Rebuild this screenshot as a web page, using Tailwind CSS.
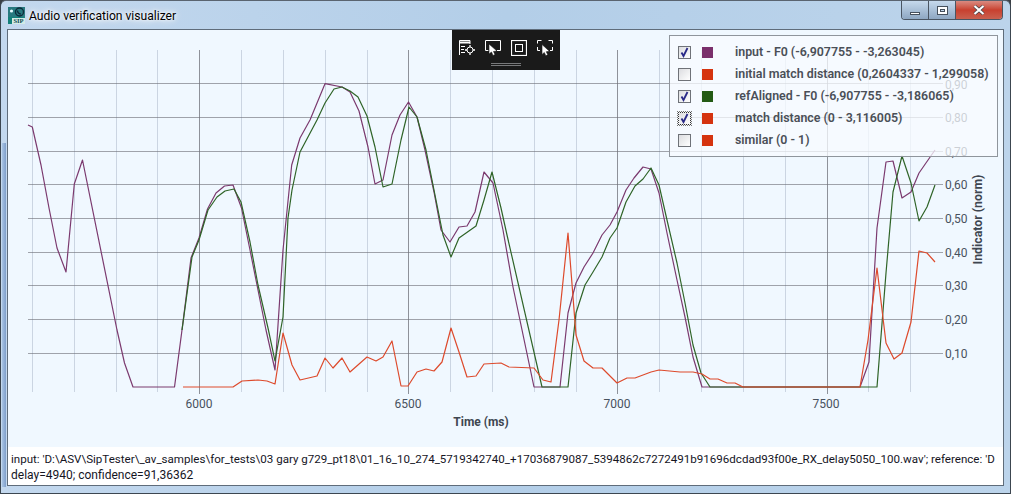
<!DOCTYPE html>
<html lang="en">
<head>
  <meta charset="UTF-8" />
  <title>Audio verification visualizer</title>
  <script src="https://cdn.jsdelivr.net/npm/@tailwindcss/browser@4"></script>
</head>
<body class="bg-[#3a3f45] overflow-hidden">

  <!-- Window -->
  <div class="relative w-[1011px] h-[494px] flex flex-col rounded-t-[6px] border border-[#3c4650] border-t-[#5a6470] bg-gradient-to-r from-[#c3d8ee] via-[#b3cee8] to-[#bcd4eb] font-['Roboto',sans-serif] overflow-hidden">

    <!-- Frame shading on the left edge -->
    <div class="absolute left-[1px] top-[142px] bottom-[6px] w-[4px] bg-gradient-to-r from-[#a9c4e4] to-[#7f9fca]"></div>

    <!-- Title bar -->
    <div class="h-[28px] shrink-0 flex items-start pl-[7px]">
      <svg class="mt-[6px]" width="17" height="17" viewBox="0 0 17 17">
        <rect width="17" height="17" fill="#12807a" />
        <rect width="17" height="10" fill="#27797f" />
        <circle cx="3.5" cy="4" r="1.6" fill="#e8fbff" />
        <circle cx="11.5" cy="5" r="4" fill="none" stroke="#0b2a3a" stroke-width="1.4" />
        <path d="M9.5 3.5c0 2 1.2 3.2 3.4 3.6" fill="none" stroke="#0b2a3a" stroke-width="1.4" />
        <rect y="11" x="4" width="13" height="6" fill="#d3ebe6" />
        <text x="10.5" y="16.4" text-anchor="middle" class="text-[6.5px] font-bold fill-[#0d4a50] font-['Liberation_Serif',serif]">SIP</text>
      </svg>
      <div class="ml-[4px] mt-[6px] text-[12.1px] leading-[18px] text-black [text-shadow:0_0_6px_#fff,0_0_10px_#fff,0_0_3px_#fff]">Audio verification visualizer</div>
      <!-- Window buttons -->
      <div class="ml-auto mr-[7px] flex h-[19px] rounded-b-[4px] border border-t-0 border-[#4a5562] overflow-hidden">
        <div class="w-[27px] flex items-end justify-center pb-[4px] bg-gradient-to-b from-[#c6d9ec] to-[#8ea7c2] border-r border-[#4a5562]">
          <div class="w-[10px] h-[3px] bg-white border border-[#46505c]"></div>
        </div>
        <div class="w-[27px] flex items-center justify-center bg-gradient-to-b from-[#c6d9ec] to-[#8ea7c2] border-r border-[#4a5562]">
          <div class="w-[11px] h-[9px] border border-[#46505c] bg-white flex items-center justify-center">
            <div class="w-[5px] h-[3px] border border-[#46505c] bg-[#c6d9ec]"></div>
          </div>
        </div>
        <div class="w-[46px] flex items-center justify-center bg-gradient-to-b from-[#d98a80] via-[#c8402f] to-[#c9604f]">
          <svg width="12" height="10" viewBox="0 0 12 10">
            <path d="M1.5 1l9 8M10.5 1l-9 8" stroke="#3a3f45" stroke-width="3.4" />
            <path d="M1.5 1l9 8M10.5 1l-9 8" stroke="#fff" stroke-width="2.2" />
          </svg>
        </div>
      </div>
    </div>

    <!-- Client area -->
    <div class="relative mx-[6px] h-[457px] shrink-0 flex flex-col border border-[#5f6c7a] bg-[#f0f8ff]">

      <!-- Chart -->
      <svg class="block shrink-0" width="995" height="417" viewBox="8 30 995 417">
        <!-- minor vertical grid -->
        <g stroke="#7d8ca6" stroke-opacity=".32" stroke-width="1">
          <path d="M32.5 50V392M74.5 50V392M116.5 50V392M157.5 50V392M241.5 50V392M283.5 50V392M325.5 50V392M367.5 50V392M450.5 50V392M492.5 50V392M534.5 50V392M576.5 50V392M659.5 50V392M701.5 50V392M743.5 50V392M785.5 50V392M868.5 50V392M910.5 50V392" />
        </g>
        <!-- major vertical grid -->
        <g stroke="#6d7078" stroke-opacity=".75" stroke-width="1">
          <path d="M199.5 50V394M408.5 50V394M617.5 50V394M827.5 50V394" />
        </g>
        <!-- horizontal grid -->
        <g stroke="#6d7078" stroke-opacity=".62" stroke-width="1">
          <path d="M28 83.5H943M28 117.5H943M28 151.5H943M28 184.5H943M28 218.5H943M28 252.5H943M28 285.5H943M28 319.5H943M28 353.5H943" />
        </g>

        <!-- series -->
        <polyline fill="none" stroke="#7b3a6f" stroke-width="1.2" stroke-linejoin="round" points="28,125 32.3,127 41,165 49,208 57,248 66,272 74.3,184 82.5,160 117,330 124.5,363 133,387 174.5,387 182,330 191,258 199,238 207.5,209 216,193 224.5,186 233,185 241.5,208 250,250 258,290 266,330 275,370 283,250 291.7,165 300,138 310,120 325,83.7 342,87 350,92 359,111 368,147 375,184 383,180 392,135 400,115 408.5,102 417,117 425,150 434,192 441,230 450,242 459,227 467,226 475,212 484,172 493,183 503,230 513,287 534,387 560,387 568,313 576,283 584,267 593,253 602,235 610,225 617,212 626,190 634,178 643,167 651,169 659,193 667,233 677,280 685,317 693,357 702,387 860,387 869,362 877,228 886,162 893,161 902,198 911,192 919,173 935,150" />
        <polyline fill="none" stroke="#2f6428" stroke-width="1.2" stroke-linejoin="round" points="182,330 192,257 199,240 208,210 217,197 225,191 234,189 241,202 250,242 258,285 268,328 275,361 283,317 288,218 292,190 300,152 317,120 325,103 334,89 342,87 350,91 358,97 367,116 375,147 383,187 392,184 401,140 409,107 417,117 426,150 434,190 443,235 451,257 459,238 476,226 484,200 492,172 501,208 507,235 542,387 568,387 576,313 585,285 593,272 602,257 610,238 617,228 626,202 635,186 643,179 651,168 659,185 667,220 677,263 685,303 693,345 701,373 710,387 877,387 886,273 893,192 902,156 911,183 919,221 927,207 935,185" />
        <polyline fill="none" stroke="#dd4a2c" stroke-width="1.2" stroke-linejoin="round" points="183,387 233,387 242,381 258,380 267,381 275,384 283,333 292,365 300,380 317,376 325,358 333,368 342,358 350,372 367,357 376,361 383,357 392,341 401,386 408,386 417,372 426,369 434,371 442,362 451,328 459,352 467,377 476,376 484,364 501,363 509,367 534,368 543,380 551,382 559,320 568,233 576,335 584,361 593,368 602,368 617,383 627,378 635,378 651,372 659,370 680,372 693,372 702,374 710,379 718,379 727,383 735,383 743,387 860,387 868,340 877,268 886,343 894,359 902,353 911,322 919,251 927,253 935,262" />

        <!-- y axis -->
        <g class="text-[12px] fill-[#48525e]">
          <text x="945" y="89">0,90</text>
          <text x="945" y="122">0,80</text>
          <text x="945" y="156">0,70</text>
          <text x="945" y="189">0,60</text>
          <text x="945" y="223">0,50</text>
          <text x="945" y="257">0,40</text>
          <text x="945" y="290">0,30</text>
          <text x="945" y="324">0,20</text>
          <text x="945" y="358">0,10</text>
        </g>
        <text transform="translate(982 219.5) rotate(-90)" text-anchor="middle" class="text-[12.3px] font-bold fill-[#3e4650]">Indicator (norm)</text>

        <!-- x axis -->
        <g class="text-[12px] fill-[#48525e]" text-anchor="middle">
          <text x="199" y="408">6000</text>
          <text x="408" y="408">6500</text>
          <text x="617" y="408">7000</text>
          <text x="826" y="408">7500</text>
        </g>
        <text x="481" y="426" text-anchor="middle" class="text-[12px] font-bold fill-[#3e4650]">Time (ms)</text>
      </svg>

      <!-- Status text -->
      <div class="flex-1 bg-white pl-[3px] pt-[4px] text-[12px] leading-[16px] text-[#15151f] overflow-hidden">
        <div class="whitespace-nowrap text-[11.57px]">input: 'D:\ASV\SipTester\_av_samples\for_tests\03 gary g729_pt18\01_16_10_274_5719342740_+17036879087_5394862c7272491b91696dcdad93f00e_RX_delay5050_100.wav'; reference: 'D</div>
        <div class="whitespace-nowrap">delay=4940; confidence=91,36362</div>
      </div>

      <!-- Toolbar -->
      <div class="absolute left-[444px] top-0 w-[108px] h-[40px] bg-[#1a1a1a] flex flex-col items-center pt-[10px]">
        <div class="flex gap-[10px]">
          <svg width="16" height="16" viewBox="0 0 16 16" fill="none" stroke="#fff">
            <path d="M.5 15V.5H11V4" />
            <path d="M.5 2.5H11" stroke-width="2" />
            <path d="M2 6.5H6M2 9.5H5M2 12.5H6" />
            <circle cx="11" cy="10" r="3" />
            <path d="M11 5V7M11 13V15M6 10H8M14 10H16" stroke-width="1.3" />
          </svg>
          <svg width="16" height="16" viewBox="0 0 16 16" fill="none" stroke="#fff">
            <path d="M3.5 10.5H.5V.5H15.5V10.5H12" />
            <path d="M4 4V14L6.5 12L8 15.5L10 14.5L8.5 11.5L12 11Z" fill="#fff" stroke="#1a1a1a" stroke-width=".6" />
          </svg>
          <svg width="16" height="16" viewBox="0 0 16 16" fill="none" stroke="#fff">
            <rect x=".5" y=".5" width="15" height="15" stroke-width="1.2" />
            <rect x="4.5" y="4.5" width="7" height="7" />
          </svg>
          <svg width="16" height="16" viewBox="0 0 16 16" fill="none" stroke="#fff">
            <path d="M.5 3.5V.5H4.5M11.5 .5H15.5V3.5M.5 7V10.5H3M15.5 7V10.5H13" />
            <path d="M5 4.5V14.5L7.3 12.5L8.8 15.8L10.8 14.8L9.3 11.7L12.5 11.3Z" fill="#fff" stroke="#1a1a1a" stroke-width=".6" />
          </svg>
        </div>
        <div class="mt-[7px] w-[30px] h-[3px] border-y border-[#77787a]"></div>
      </div>

      <!-- Legend -->
      <div class="absolute left-[661px] top-[5px] w-[329px] h-[122px] border border-[#8f959c] bg-[#f8fbff]/75 flex flex-col pl-[8px] pt-[5px] text-[12.4px] font-semibold text-[#4a4f57]">
        <div class="h-[22px] flex items-center">
          <span class="w-[13px] h-[13px] border border-[#6f7278] bg-gradient-to-br from-[#dcdde0] to-white flex items-center justify-center">
            <svg width="11" height="11" viewBox="0 0 11 11"><path d="M2.5 5.5L4.5 9L8.5 1" fill="none" stroke="#2a2a88" stroke-width="1.8" /></svg>
          </span>
          <span class="ml-[11px] w-[11px] h-[11px] bg-[#7a2f6b]"></span>
          <span class="ml-[22px] whitespace-nowrap">input - F0 (-6,907755 - -3,263045)</span>
        </div>
        <div class="h-[22px] flex items-center">
          <span class="w-[13px] h-[13px] border border-[#6f7278] bg-gradient-to-br from-[#dcdde0] to-white"></span>
          <span class="ml-[11px] w-[11px] h-[11px] bg-[#d5330f]"></span>
          <span class="ml-[22px] whitespace-nowrap">initial match distance (0,2604337 - 1,299058)</span>
        </div>
        <div class="h-[22px] flex items-center">
          <span class="w-[13px] h-[13px] border border-[#6f7278] bg-gradient-to-br from-[#dcdde0] to-white flex items-center justify-center">
            <svg width="11" height="11" viewBox="0 0 11 11"><path d="M2.5 5.5L4.5 9L8.5 1" fill="none" stroke="#2a2a88" stroke-width="1.8" /></svg>
          </span>
          <span class="ml-[11px] w-[11px] h-[11px] bg-[#235a14]"></span>
          <span class="ml-[22px] whitespace-nowrap">refAligned - F0 (-6,907755 - -3,186065)</span>
        </div>
        <div class="h-[22px] flex items-center">
          <span class="w-[13px] h-[13px] border border-dotted border-[#333] outline outline-1 outline-dotted outline-[#777] bg-gradient-to-br from-[#dcdde0] to-white flex items-center justify-center">
            <svg width="11" height="11" viewBox="0 0 11 11"><path d="M2.5 5.5L4.5 9L8.5 1" fill="none" stroke="#2a2a88" stroke-width="1.8" /></svg>
          </span>
          <span class="ml-[11px] w-[11px] h-[11px] bg-[#d5330f]"></span>
          <span class="ml-[22px] whitespace-nowrap">match distance (0 - 3,116005)</span>
        </div>
        <div class="h-[22px] flex items-center">
          <span class="w-[13px] h-[13px] border border-[#6f7278] bg-gradient-to-br from-[#dcdde0] to-white"></span>
          <span class="ml-[11px] w-[11px] h-[11px] bg-[#d5330f]"></span>
          <span class="ml-[22px] whitespace-nowrap">similar (0 - 1)</span>
        </div>
      </div>
    </div>
  </div>

</body>
</html>
